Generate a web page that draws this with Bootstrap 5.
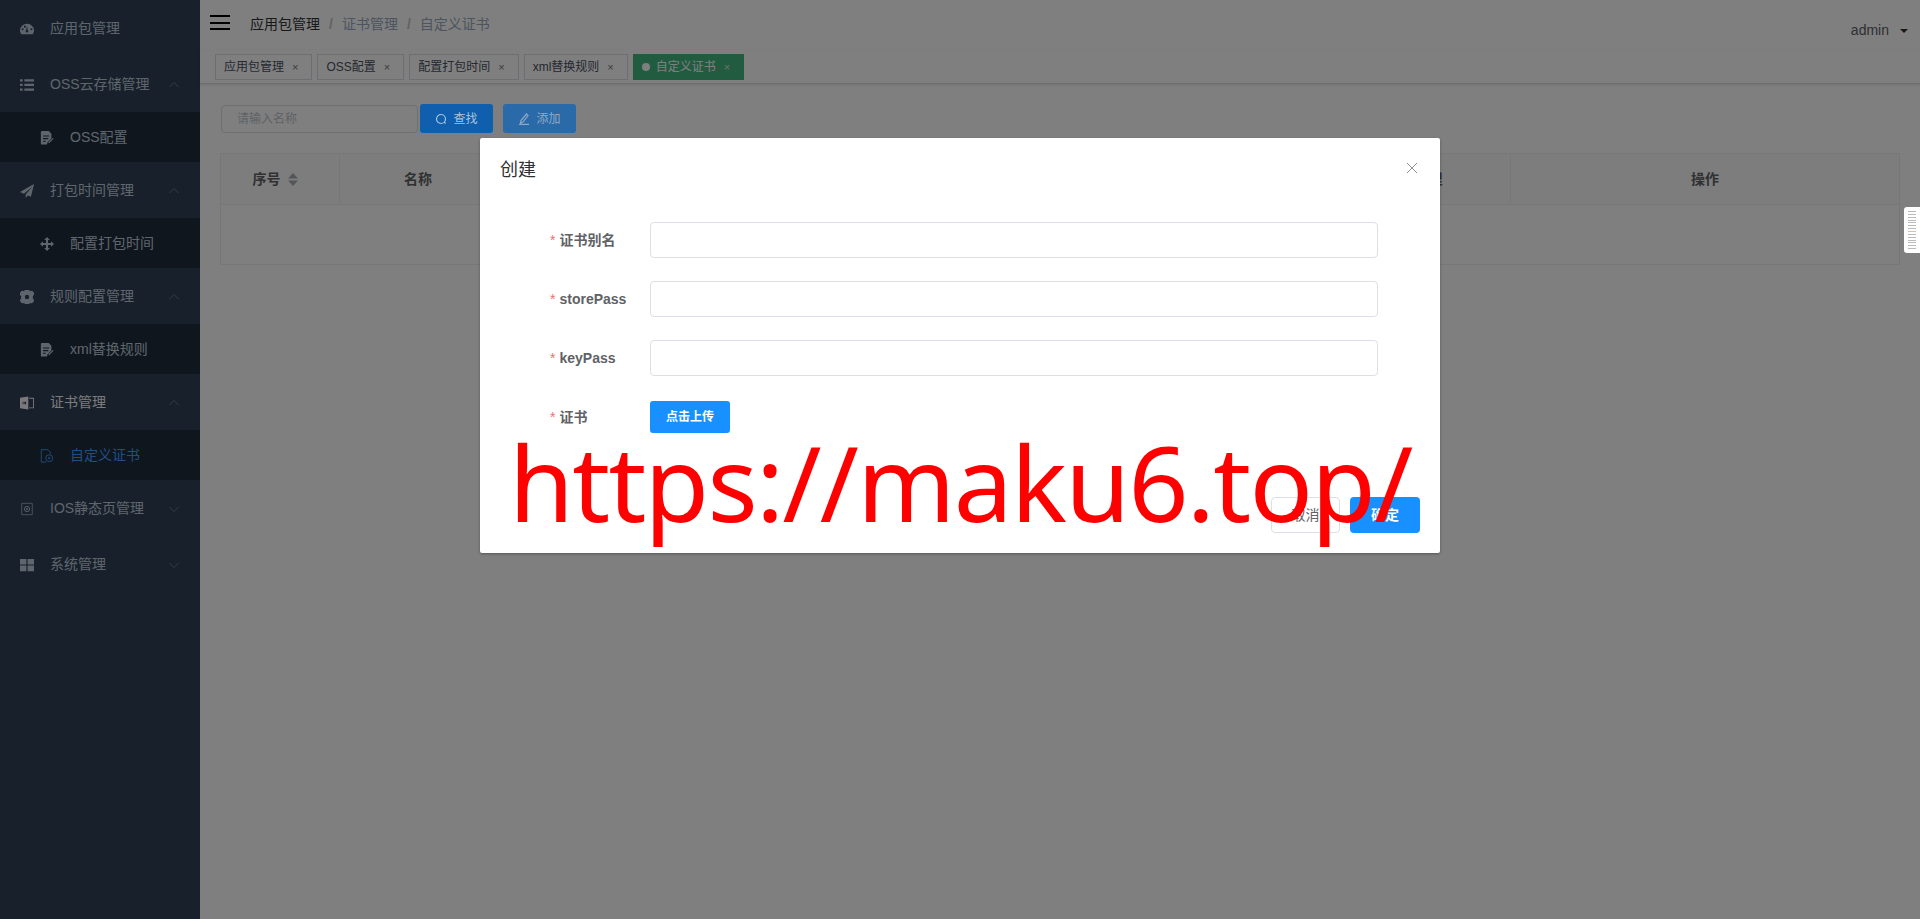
<!doctype html>
<html lang="zh">
<head>
<meta charset="utf-8">
<title>自定义证书</title>
<link href="https://cdn.jsdelivr.net/npm/bootstrap@5.3.0/dist/css/bootstrap.min.css" rel="stylesheet">
<style>
html,body{height:100%;overflow:hidden}
body{font-family:"Liberation Sans","Noto Sans CJK SC",sans-serif;font-size:14px;color:#606266;background:#fff}
.app-shell{height:919px}
.side-bar{width:200px;flex:none;background:#304156;color:#bfcbd9}
.side-head,.side-sub{display:flex;align-items:center;padding-top:1px}
.side-head{height:56px;padding-left:20px;padding-right:20px}
.side-sub{height:50px;padding-left:40px;background:#1f2d3d}
.side-head svg.ico,.side-sub svg.ico{width:14px;height:14px;flex:none;margin-right:16px;fill:currentColor}
.side-chev{width:12px;height:12px;margin-left:auto;fill:none;stroke:#6b7a8c;stroke-width:1}
.side-now{color:#f4f4f5}
.side-on{color:#409eff}
.top-bar{height:50px;padding:0 12px 0 10px}
.burger{width:20px;height:15px;border-top:2px solid #000;border-bottom:2px solid #000;position:relative;margin-top:-5px;margin-right:20px}
.burger::after{content:"";position:absolute;left:0;right:0;top:4.500px;height:2px;background:#000}
.crumb{color:#97a8be;margin-top:-1px}
.crumb b{font-weight:400;color:#303133}
.crumb i{font-style:normal;color:#c0c4cc;margin:0 9px;font-weight:700}
.user-name{margin-top:10px;color:#5a5e66}
.user-caret{border:4px solid transparent;border-top-color:#303133;border-bottom:0;margin:11px 0 0 11px}
.tag-bar{height:34px;padding:4px 15px;border-bottom:1px solid #d8dce5;box-shadow:0 1px 3px rgba(0,0,0,.12);gap:5px}
.tag-pill{height:26px;border:1px solid #d8dce5;padding:0 13px 0 8px;font-size:12px;color:#495060;display:flex;align-items:center;background:#fff}
.tag-pill small{font-size:11px;margin-left:8px;color:#777;line-height:1}
.tag-live{background:#42b983;border-color:#42b983;color:#fff}
.tag-live small{color:#ddd}
.tag-dot{width:8px;height:8px;border-radius:50%;background:#fff;margin-right:6px}
.tool-row{padding:20px 20px 0 21px;height:69px;gap:10px}
.find-box{width:197px;height:28px;margin-top:1px;border:1px solid #dcdfe6;border-radius:4px;padding:0 15px;font-size:12px;color:#c0c4cc;display:flex;align-items:center;margin-right:-8px}
.act-btn{height:29px;width:73px;border-radius:3px;border:0;color:#a9c2dc;font-size:12px;display:flex;align-items:center;justify-content:center;gap:6px;position:relative;z-index:20;padding:0}
.act-find{background:#0f5fae}
.act-add{background:#2a6aa9;color:#8fa9c4}
.act-btn svg{width:12px;height:12px;fill:none;stroke:currentColor;stroke-width:1.2}
.data-wrap{margin:0 20px;border:1px solid #ebeef5;height:112px}
.data-head{height:51px;border-bottom:1px solid #ebeef5;background:#fafafa;font-weight:700;color:#606266;font-size:14px}
.data-head>div{display:flex;align-items:center;justify-content:center;border-right:1px solid #ebeef5;gap:6px}
.data-head>div:last-child{border-right:0}
.sort-cell{padding-right:9px}
.sort-ico{width:12px;height:15px;fill:#a8abb2}
.dim-layer{position:absolute;inset:0;background:rgba(0,0,0,.5);z-index:10}
.dlg-box{position:absolute;left:480px;top:138px;width:960px;height:415px;background:#fff;z-index:30;border-radius:2px;box-shadow:0 1px 3px rgba(0,0,0,.3)}
.dlg-head{height:64px;padding:20px 20px 0;font-size:18px;line-height:24px;color:#303133}
.dlg-x{position:absolute;right:22px;top:24px;width:12px;height:12px;stroke:#909399;fill:none;stroke-width:1}
.dlg-body{padding:20px 62px 0 70px}
.dlg-row{height:36px;margin-bottom:23px;display:flex;align-items:center}
.dlg-label{width:100px;flex:none;font-weight:700;color:#606266}
.dlg-label em{font-style:normal;color:#f56c6c;margin-right:4px;font-weight:400}
.dlg-input{flex:1;height:36px;border:1px solid #dcdfe6;border-radius:4px;padding:0 15px}
.dlg-up{width:80px;height:32px;background:#1890ff;color:#fff;border:0;border-radius:3px;font-size:12px;font-weight:700;padding:0}
.dlg-foot{position:absolute;right:20px;bottom:20px;gap:10px}
.foot-no{width:69px;height:36px;border:1px solid #dcdfe6;background:#fff;border-radius:4px;color:#606266;padding:0;font-size:14px}
.foot-ok{width:70px;height:36px;border:0;background:#1890ff;border-radius:4px;color:#fff;padding:0;font-size:14px;font-weight:700}
.stamp{position:absolute;left:509px;top:410px;z-index:40;font-family:"Noto Sans",sans-serif;font-size:105px;letter-spacing:-1.700px;line-height:143px;color:#f00;white-space:nowrap;pointer-events:none}
.edge-tab{position:absolute;right:0;top:207px;width:16px;height:46px;background:#fff;border-radius:3px 0 0 3px;z-index:30;padding:4px 4px;display:flex;flex-direction:column;gap:2px}
.edge-tab span{height:1px;background:#bbb}
.edge-tab span.warm{background:#e2c0a6}
</style>
</head>
<body>
<div class="app-shell d-flex position-relative">
  <aside class="side-bar">
    <div class="side-head"><svg class="ico" viewBox="0 0 16 16"><path d="M8 2a8 7.400 0 0 0-8 7.400c0 1.900.7 3.300 1.700 4.600h12.600c1-1.300 1.700-2.700 1.700-4.600A8 7.400 0 0 0 8 2zM3 9.500a1.200 1.200 0 1 1 0-2.400 1.200 1.200 0 0 1 0 2.400zm2.600-3a1.200 1.200 0 1 1 0-2.400 1.200 1.200 0 0 1 0 2.400zM8 12a1.500 1.500 0 0 1-.8-2.800l.8-5 .8 5A1.500 1.500 0 0 1 8 12zm5-2.500a1.200 1.200 0 1 1 0-2.400 1.200 1.200 0 0 1 0 2.400z"/></svg><span>应用包管理</span></div>
    <div class="side-head"><svg class="ico" viewBox="0 0 16 16"><path d="M0 1.500h3v2.500H0zM5 1.500h11v2.500H5zM0 6.700h3v2.500H0zM5 6.700h11v2.500H5zM0 12h3v2.500H0zM5 12h11v2.500H5z"/></svg><span>OSS云存储管理</span><svg class="side-chev" viewBox="0 0 12 12"><path d="M1.500 8 6 3.500 10.500 8"/></svg></div>
    <div class="side-sub"><svg class="ico" viewBox="0 0 16 16"><path fill-rule="evenodd" d="M1 1a1 1 0 0 1 1-1h8l3 3v5.500L8.500 13 8 15.500H2a1 1 0 0 1-1-1zM3.500 5v1.300h7V5zm0 3v1.300h6V8zm0 3v1.300h3V11z"/><path d="m10 13.500 5-5" stroke="currentColor" stroke-width="1.400"/></svg><span>OSS配置</span></div>
    <div class="side-head"><svg class="ico" viewBox="0 0 16 16"><path d="M16 0 0 9l4.500 2L14 3 6.500 12v4l2.500-3 3.500 1.500z"/></svg><span>打包时间管理</span><svg class="side-chev" viewBox="0 0 12 12"><path d="M1.500 8 6 3.500 10.500 8"/></svg></div>
    <div class="side-sub"><svg class="ico" viewBox="0 0 16 16"><path d="m8 0 3.200 3.400H9.200v3.400h3.400v-2L16 8l-3.400 3.200v-2H9.200v3.400h2L8 16l-3.200-3.400h2V9.200H3.400v2L0 8l3.400-3.200v2h3.400V3.400h-2z"/></svg><span>配置打包时间</span></div>
    <div class="side-head"><svg class="ico" viewBox="0 0 16 16"><path fill-rule="evenodd" d="M5 1.500a3 3 0 0 1 6 0 3 3 0 0 1 3.500 5.500 3 3 0 0 1 0 2.500A3 3 0 0 1 11 14.500a3 3 0 0 1-6 0A3 3 0 0 1 1.500 9.500a3 3 0 0 1 0-2.500A3 3 0 0 1 5 1.500zM8 5.500a2.500 2.500 0 1 0 0 5 2.500 2.500 0 0 0 0-5z"/></svg><span>规则配置管理</span><svg class="side-chev" viewBox="0 0 12 12"><path d="M1.500 8 6 3.500 10.500 8"/></svg></div>
    <div class="side-sub"><svg class="ico" viewBox="0 0 16 16"><path fill-rule="evenodd" d="M1 1a1 1 0 0 1 1-1h8l3 3v5.500L8.500 13 8 15.500H2a1 1 0 0 1-1-1zM3.500 5v1.300h7V5zm0 3v1.300h6V8zm0 3v1.300h3V11z"/><path d="m10 13.500 5-5" stroke="currentColor" stroke-width="1.400"/></svg><span>xml替换规则</span></div>
    <div class="side-head side-now"><svg class="ico" viewBox="0 0 16 16"><path fill-rule="evenodd" d="M0 2 9.500.5v15L0 14zM3 6.500v3h1v-3zm2 0v3h2v-3z"/><path d="M10.500 2H16v12h-5.500v-1H15V3h-4.500z"/></svg><span>证书管理</span><svg class="side-chev" viewBox="0 0 12 12"><path d="M1.500 8 6 3.500 10.500 8"/></svg></div>
    <div class="side-sub side-on"><svg class="ico" viewBox="0 0 16 16" style="fill:none;stroke:currentColor"><path d="M7 15H1.500V.8H9l3 3v1.700"/><circle cx="10.500" cy="10.500" r="4"/><circle cx="10.500" cy="10.500" r="1"/></svg><span>自定义证书</span></div>
    <div class="side-head"><svg class="ico" viewBox="0 0 16 16" style="fill:none;stroke:currentColor"><path d="M2 1.500h12v13H2z" stroke-width=".8"/><circle cx="8" cy="8" r="3"/><circle cx="8" cy="8" r=".8"/></svg><span>IOS静态页管理</span><svg class="side-chev" viewBox="0 0 12 12"><path d="M1.500 4 6 8.500 10.500 4"/></svg></div>
    <div class="side-head"><svg class="ico" viewBox="0 0 16 16"><path d="M0 1h7.300v6.500H0zM8.700 1H16v6.500H8.700zM0 8.700h7.300V15H0zM8.700 8.700H16V15H8.700z"/></svg><span>系统管理</span><svg class="side-chev" viewBox="0 0 12 12"><path d="M1.500 4 6 8.500 10.500 4"/></svg></div>
  </aside>
  <main class="flex-grow-1 d-flex flex-column">
    <div class="top-bar d-flex align-items-center">
      <div class="burger"></div>
      <div class="crumb"><b>应用包管理</b><i>/</i>证书管理<i>/</i>自定义证书</div>
      <div class="ms-auto d-flex align-items-center"><span class="user-name">admin</span><span class="user-caret"></span></div>
    </div>
    <div class="tag-bar d-flex">
      <div class="tag-pill">应用包管理<small>×</small></div>
      <div class="tag-pill">OSS配置<small>×</small></div>
      <div class="tag-pill">配置打包时间<small>×</small></div>
      <div class="tag-pill">xml替换规则<small>×</small></div>
      <div class="tag-pill tag-live"><span class="tag-dot"></span>自定义证书<small>×</small></div>
    </div>
    <div class="tool-row d-flex align-items-start">
      <div class="find-box">请输入名称</div>
      <button class="act-btn act-find" type="button"><svg viewBox="0 0 12 12"><circle cx="6" cy="6" r="4.500"/><path d="m9 9 1.500 1.500"/></svg>查找</button>
      <button class="act-btn act-add" type="button"><svg viewBox="0 0 12 12"><path d="M8.500 1 3 7.500 2.500 10 5 9l5-6.500zM1 11.300h10"/></svg>添加</button>
    </div>
    <div class="data-wrap">
      <div class="data-head d-flex">
        <div class="sort-cell" style="width:119px"><span>序号</span><svg class="sort-ico" viewBox="0 0 12 15"><path d="M6 1l5 5.500H1zM6 14 1 8.500h10z"/></svg></div>
        <div style="width:157px">名称</div>
        <div style="width:850px"></div>
        <div style="width:164px">管理</div>
        <div class="flex-grow-1">操作</div>
      </div>
    </div>
  </main>
  <div class="dim-layer"></div>
  <div class="dlg-box">
    <div class="dlg-head">创建</div>
    <svg class="dlg-x" viewBox="0 0 12 12"><path d="m1 1 10 10M11 1 1 11"/></svg>
    <form class="dlg-body">
      <div class="dlg-row"><label class="dlg-label"><em>*</em>证书别名</label><div class="dlg-input"></div></div>
      <div class="dlg-row"><label class="dlg-label"><em>*</em>storePass</label><div class="dlg-input"></div></div>
      <div class="dlg-row"><label class="dlg-label"><em>*</em>keyPass</label><div class="dlg-input"></div></div>
      <div class="dlg-row"><label class="dlg-label"><em>*</em>证书</label><button class="dlg-up" type="button">点击上传</button></div>
    </form>
    <div class="dlg-foot d-flex"><button class="foot-no" type="button">取消</button><button class="foot-ok" type="button">确定</button></div>
  </div>
  <div class="stamp">https://maku6.top/</div>
  <div class="edge-tab"><span></span><span></span><span></span><span></span><span></span><span></span><span></span><span class="warm"></span><span></span><span></span><span></span><span></span><span></span><span></span></div>
</div>
<script src="https://cdn.jsdelivr.net/npm/bootstrap@5.3.0/dist/js/bootstrap.bundle.min.js"></script>
</body>
</html>
